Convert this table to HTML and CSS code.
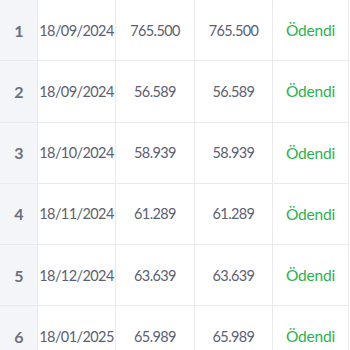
FILE: index.html
```html
<!DOCTYPE html>
<html lang="tr">
<head>
<meta charset="utf-8">
<link rel="stylesheet" href="styles.css">
</head>
<body>
<div class="table">
  <div class="row"><div class="cell idx">1</div><div class="cell">18/09/2024</div><div class="cell">765.500</div><div class="cell">765.500</div><div class="cell paid">Ödendi</div></div>
  <div class="row"><div class="cell idx">2</div><div class="cell">18/09/2024</div><div class="cell">56.589</div><div class="cell">56.589</div><div class="cell paid">Ödendi</div></div>
  <div class="row"><div class="cell idx">3</div><div class="cell">18/10/2024</div><div class="cell">58.939</div><div class="cell">58.939</div><div class="cell paid">Ödendi</div></div>
  <div class="row"><div class="cell idx">4</div><div class="cell">18/11/2024</div><div class="cell">61.289</div><div class="cell">61.289</div><div class="cell paid">Ödendi</div></div>
  <div class="row"><div class="cell idx">5</div><div class="cell">18/12/2024</div><div class="cell">63.639</div><div class="cell">63.639</div><div class="cell paid">Ödendi</div></div>
  <div class="row"><div class="cell idx">6</div><div class="cell">18/01/2025</div><div class="cell">65.989</div><div class="cell">65.989</div><div class="cell paid">Ödendi</div></div>
</div>
</body>
</html>
```
FILE: styles.css
```css
html, body {
  margin: 0;
  padding: 0;
  background: #ffffff;
}
.table {
  width: 349px;
  font-family: Lato, "Noto Sans", sans-serif;
  font-size: 14.5px;
  letter-spacing: -0.6px;
  color: #5b6072;
}
.row {
  display: grid;
  grid-template-columns: 38px 78px 79px 78px 76px;
  height: 61.25px;
}
.cell {
  box-sizing: border-box;
  border-right: 1px solid #e9eaf0;
  border-bottom: 1px solid #e9eaf0;
  display: flex;
  align-items: center;
  justify-content: center;
}
.idx {
  background: #f4f5f8;
  font-size: 16px;
  font-weight: 700;
  color: #6a6f80;
}
.paid {
  font-size: 15.5px;
  letter-spacing: -0.2px;
  color: #2bb24c;
}
```
